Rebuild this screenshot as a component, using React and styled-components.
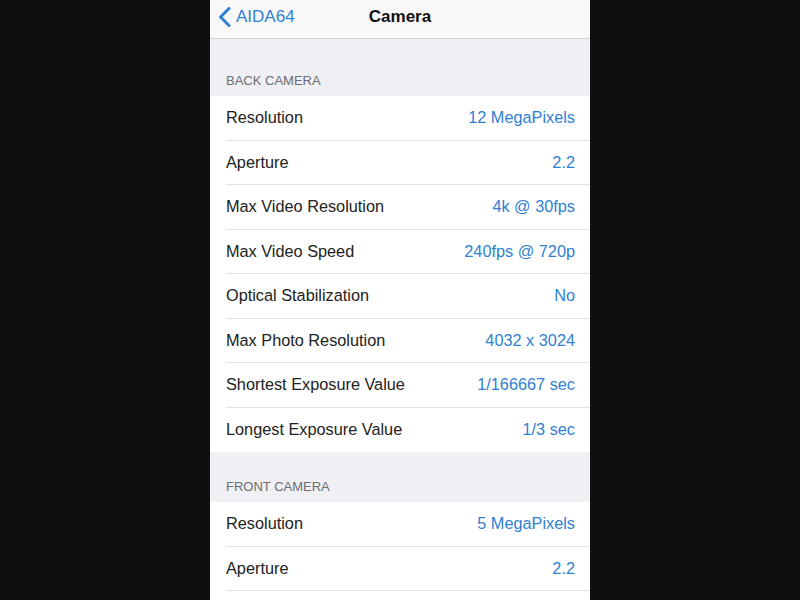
import React from "react";
import styled, { createGlobalStyle } from "styled-components";

const GlobalStyle = createGlobalStyle`
  html, body {
    margin: 0;
    padding: 0;
    background: #0f0f0f;
    font-family: "Liberation Sans", Arial, sans-serif;
  }
`;

const Stage = styled.div`
  width: 800px;
  height: 600px;
  display: flex;
  justify-content: center;
  overflow: hidden;
  background: #0f0f0f;
`;

const Phone = styled.div`
  width: 380px;
  height: 600px;
  background: #efeff4;
  display: flex;
  flex-direction: column;
  overflow: hidden;

  & > * {
    flex-shrink: 0;
  }
`;

const NavBar = styled.div`
  height: 39px;
  padding-bottom: 4px;
  box-sizing: border-box;
  background: #f8f8f8;
  border-bottom: 1px solid #d4d4d8;
  display: grid;
  grid-template-columns: 1fr auto 1fr;
  align-items: center;
`;

const BackButton = styled.div`
  display: flex;
  align-items: center;
  gap: 5px;
  padding-left: 8px;
  color: #2f7fd3;
  font-size: 17px;
`;

const Title = styled.div`
  font-size: 17px;
  font-weight: bold;
  color: #111;
`;

const SectionHeader = styled.div`
  height: ${(p) => p.$height}px;
  display: flex;
  align-items: flex-end;
  padding: 0 16px 8px;
  box-sizing: border-box;
  font-size: 13px;
  color: #6d6d72;
  text-transform: uppercase;
`;

// a group that runs off the bottom of the screen keeps going in white
const Group = styled.div`
  background: #fff;
  flex-grow: ${(p) => (p.$open ? 1 : 0)};
`;

const Row = styled.div`
  height: 44.5px;
  box-sizing: border-box;
  margin-left: 16px;
  padding-right: 15px;
  display: flex;
  align-items: center;
  justify-content: space-between;
  font-size: 16.3px;
  border-bottom: 1px solid #e2e2e6;

  ${Group}:not([data-open]) &:last-child {
    border-bottom: none;
  }
`;

const Label = styled.span`
  color: #222;
`;

const Value = styled.span`
  color: #2f7fd3;
`;

const Chevron = () => (
  <svg width="13" height="20" viewBox="0 0 13 20">
    <path d="M11 1.5 L2.5 10 L11 18.5" fill="none" stroke="#2f7fd3" strokeWidth="3" strokeLinecap="round" strokeLinejoin="round" />
  </svg>
);

const backCamera = [
  ["Resolution", "12 MegaPixels"],
  ["Aperture", "2.2"],
  ["Max Video Resolution", "4k @ 30fps"],
  ["Max Video Speed", "240fps @ 720p"],
  ["Optical Stabilization", "No"],
  ["Max Photo Resolution", "4032 x 3024"],
  ["Shortest Exposure Value", "1/166667 sec"],
  ["Longest Exposure Value", "1/3 sec"],
];

const frontCamera = [
  ["Resolution", "5 MegaPixels"],
  ["Aperture", "2.2"],
];

function Section({ title, rows, top, open }) {
  return (
    <>
      <SectionHeader $height={top}>{title}</SectionHeader>
      <Group $open={open} data-open={open || undefined}>
        {rows.map(([label, value]) => (
          <Row key={label}>
            <Label>{label}</Label>
            <Value>{value}</Value>
          </Row>
        ))}
      </Group>
    </>
  );
}

export default function App() {
  return (
    <Stage>
      <GlobalStyle />
      <Phone>
        <NavBar>
          <BackButton>
            <Chevron />
            AIDA64
          </BackButton>
          <Title>Camera</Title>
          <div />
        </NavBar>
        <Section title="Back Camera" rows={backCamera} top={57} />
        <Section title="Front Camera" rows={frontCamera} top={50} open />
      </Phone>
    </Stage>
  );
}
